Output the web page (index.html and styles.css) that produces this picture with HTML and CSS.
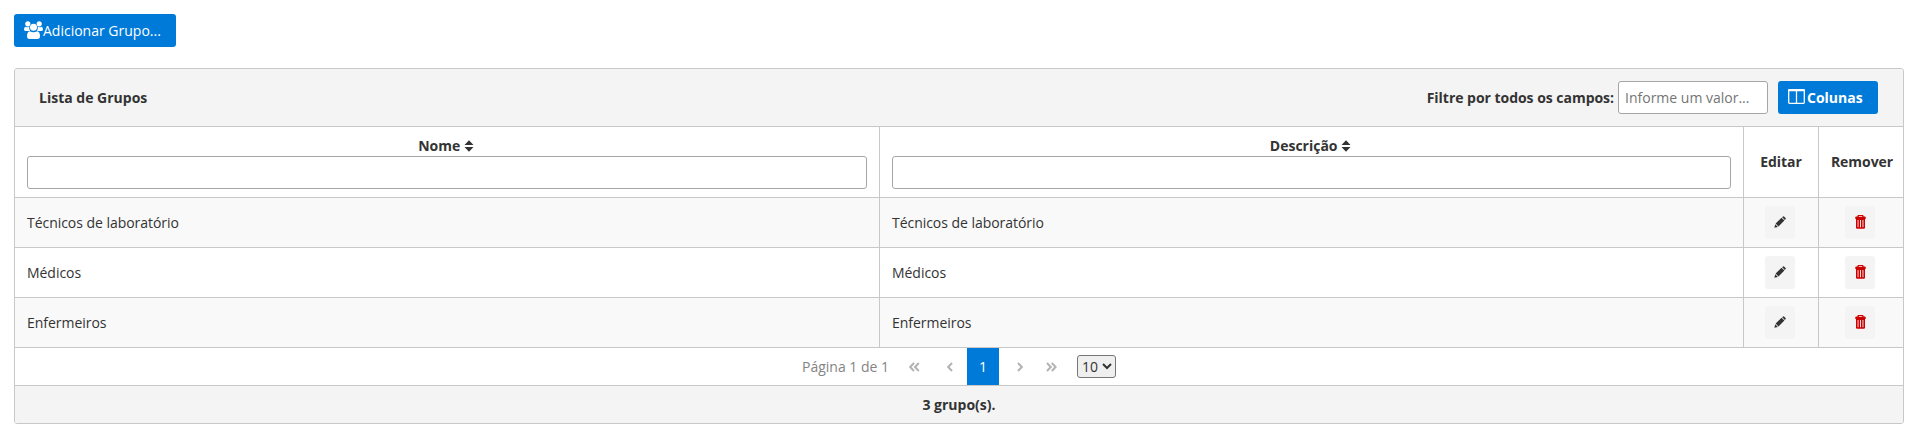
FILE: index.html
```html
<!DOCTYPE html>
<html lang="pt-BR">
<head>
<meta charset="utf-8">
<title>Grupos</title>
<link rel="stylesheet" href="styles.css">
</head>
<body>
<svg class="sprite" width="0" height="0">
  <symbol id="pencil" viewBox="0 0 12 12"><path d="M.4 11.700 1.200 8.200 3.900 10.900zM1.600 7.500 7.500 1.700 10.400 4.500 4.500 10.400zM8.200 1.200 9 .5q.5-.4 1 0l1.600 1.600q.4.5 0 1L10.900 3.900z"/></symbol>
  <symbol id="trash" viewBox="0 0 11 14"><path fill-rule="evenodd" d="M2.500 2V.8Q2.500 0 3.300 0H7.700Q8.500 0 8.500.8V1.500H10Q10.700 1.500 10.700 2.500V4H10V12.700Q10 13.700 8.800 13.700H2.200Q1 13.700 1 12.700V4H.3V2.500Q.3 1.500 1 1.500H2.500ZM3.800 1.200V2H7.200V1.200ZM2.600 5V12.200H3.500V5ZM5.050 5V12.200H5.950V5ZM7.500 5V12.200H8.400V5Z"/></symbol>
  <symbol id="sort" viewBox="0 0 10 12"><path d="M5 .2 9.500 5H.5zM5 11.800.5 7H9.500z"/></symbol>
</svg>
<button class="btn btn-add"><svg class="icon-users" width="19" height="18" viewBox="0 0 19 18"><circle cx="3.800" cy="2.800" r="2.600"/><circle cx="15.200" cy="2.800" r="2.600"/><path d="M1.800 5.700Q3.800 6.900 5.200 5.500 5 8.200 6 10H2Q0 10 0 8.500 0 6 1.800 5.700zM17.200 5.700Q15.200 6.900 13.800 5.500 14 8.200 13 10H17Q19 10 19 8.500 19 6 17.200 5.700z"/><circle cx="9.500" cy="6.300" r="3.500"/><path d="M5.800 10.200Q9.500 12.500 13.200 10.200 16 10.700 16 15.300 16 18 13.500 18H5.500Q3 18 3 15.300 3 10.700 5.800 10.200z"/></svg><span>Adicionar Grupo...</span></button>
<section class="panel">
  <header class="bar">
    <span class="title">Lista de Grupos</span>
    <label for="all">Filtre por todos os campos:</label>
    <input id="all" class="field search" placeholder="Informe um valor...">
    <button class="btn btn-cols"><svg class="icon-cols" width="17" height="15" viewBox="0 0 17 15"><path fill="none" stroke="currentColor" stroke-width="1.300" d="M.7 1.500V13.500Q.7 14.300 1.500 14.300H15.500Q16.300 14.300 16.300 13.500V1.500M8.500 2V14"/><path d="M1 0H16Q17 0 17 1V2.200H0V1Q0 0 1 0z"/></svg><span>Colunas</span></button>
  </header>
  <div class="row head">
    <div class="cell th"><span>Nome <svg class="sort"><use href="#sort"/></svg></span><input class="field"></div>
    <div class="cell th"><span>Descrição <svg class="sort"><use href="#sort"/></svg></span><input class="field"></div>
    <div class="cell action">Editar</div>
    <div class="cell action">Remover</div>
  </div>
  <div class="row odd">
    <div class="cell">Técnicos de laboratório</div><div class="cell">Técnicos de laboratório</div>
    <div class="cell action"><button class="flat"><svg class="pencil"><use href="#pencil"/></svg></button></div>
    <div class="cell action"><button class="flat"><svg class="trash"><use href="#trash"/></svg></button></div>
  </div>
  <div class="row">
    <div class="cell">Médicos</div><div class="cell">Médicos</div>
    <div class="cell action"><button class="flat"><svg class="pencil"><use href="#pencil"/></svg></button></div>
    <div class="cell action"><button class="flat"><svg class="trash"><use href="#trash"/></svg></button></div>
  </div>
  <div class="row odd">
    <div class="cell">Enfermeiros</div><div class="cell">Enfermeiros</div>
    <div class="cell action"><button class="flat"><svg class="pencil"><use href="#pencil"/></svg></button></div>
    <div class="cell action"><button class="flat"><svg class="trash"><use href="#trash"/></svg></button></div>
  </div>
  <nav class="pager">
    <span class="current">Página 1 de 1</span>
    <svg class="nav first" width="11" height="10"><path d="M5 1 1.200 5 5 9M9.800 1 6 5 9.800 9"/></svg>
    <svg class="nav prev" width="6" height="10"><path d="M5 1 1.200 5 5 9"/></svg>
    <span class="page">1</span>
    <svg class="nav next" width="6" height="10"><path d="M1 1 4.800 5 1 9"/></svg>
    <svg class="nav last" width="11" height="10"><path d="M1 1 4.800 5 1 9M5.800 1 9.600 5 5.800 9"/></svg>
    <select class="size"><option>10</option></select>
  </nav>
  <footer class="foot">3 grupo(s).</footer>
</section>
</body>
</html>
```
FILE: styles.css
```css
* { box-sizing: border-box; }
body { margin: 0; padding: 14px 8px 0 14px; font: 14px/19px "Open Sans", "Noto Sans", sans-serif; color: #333; background: #fff; }
.sprite { display: block; height: 0; }
button, input, select { font: inherit; }
svg { fill: currentColor; flex: none; }
.btn { display: flex; align-items: center; height: 33px; padding: 0 0 0 10px; border: 0; border-radius: 3px; background: #007ad9; color: #fff; white-space: nowrap; }
.btn-add { width: 162px; }
.icon-users { margin-top: -2px; }
.panel { margin-top: 21px; width: 1890px; border: 1px solid #c8c8c8; border-radius: 3px; overflow: hidden; }
.bar { display: flex; align-items: center; height: 58px; padding: 0 25px 1px 24px; background: #f4f4f4; border-bottom: 1px solid #c8c8c8; font-weight: 700; }
.bar label { letter-spacing: -.03px; }
.title { margin-right: auto; }
.field { height: 33px; padding: 6px; border: 1px solid #a6a6a6; border-radius: 3px; background: #fff; }
.field::placeholder { color: #757575; }
.search { width: 150px; margin: 0 10px 0 4px; font-weight: 400; }
.btn-cols { width: 100px; }
.btn-cols span { margin-left: 2px; }
.icon-cols { margin-top: -2px; }
.row { display: grid; grid-template-columns: 865px 864px 75px 84px; height: 50px; border-bottom: 1px solid #c8c8c8; }
.row.head { height: 71px; font-weight: 700; }
.odd { background: #f9f9f9; }
.cell { display: flex; align-items: center; padding: 0 12px; border-right: 1px solid #c8c8c8; letter-spacing: -.04px; }
.cell:last-child { border-right: 0; }
.th { flex-direction: column; padding-top: 9px; letter-spacing: 0; }
.th span { padding-right: 2px; }
.th .field { width: 100%; margin-top: 1px; }
.action { justify-content: center; padding: 0 2px 0 0; }
.head .action { padding: 0 0 2px; }
.head .action:last-child { padding-left: 2px; }
.sort { width: 10px; height: 12px; vertical-align: -1px; }
.flat { display: flex; align-items: center; justify-content: center; width: 30px; height: 33px; padding: 0 0 1px; border: 0; border-radius: 3px; background: #f4f4f4; color: #333; }
.pencil { width: 12px; height: 12px; }
.trash { width: 11px; height: 14px; color: #cd0000; }
.pager { display: flex; align-items: center; height: 38px; padding-left: 787px; border-bottom: 1px solid #c8c8c8; }
.current { width: 107px; color: #848484; }
.nav { fill: none; stroke: #b3b3b3; stroke-width: 2; }
.prev { margin-left: 27px; }
.page { width: 32px; margin: 0 18px 0 14px; line-height: 37px; text-align: center; color: #fff; background: #007ad9; }
.last { margin-left: 23px; }
.size { width: 39px; height: 23px; margin-left: 20px; padding: 0; border: 1px solid #767676; border-radius: 3px; color: #333; background-color: #efefef; }
.foot { height: 37px; line-height: 37px; text-align: center; font-weight: 700; background: #f4f4f4; }
```
